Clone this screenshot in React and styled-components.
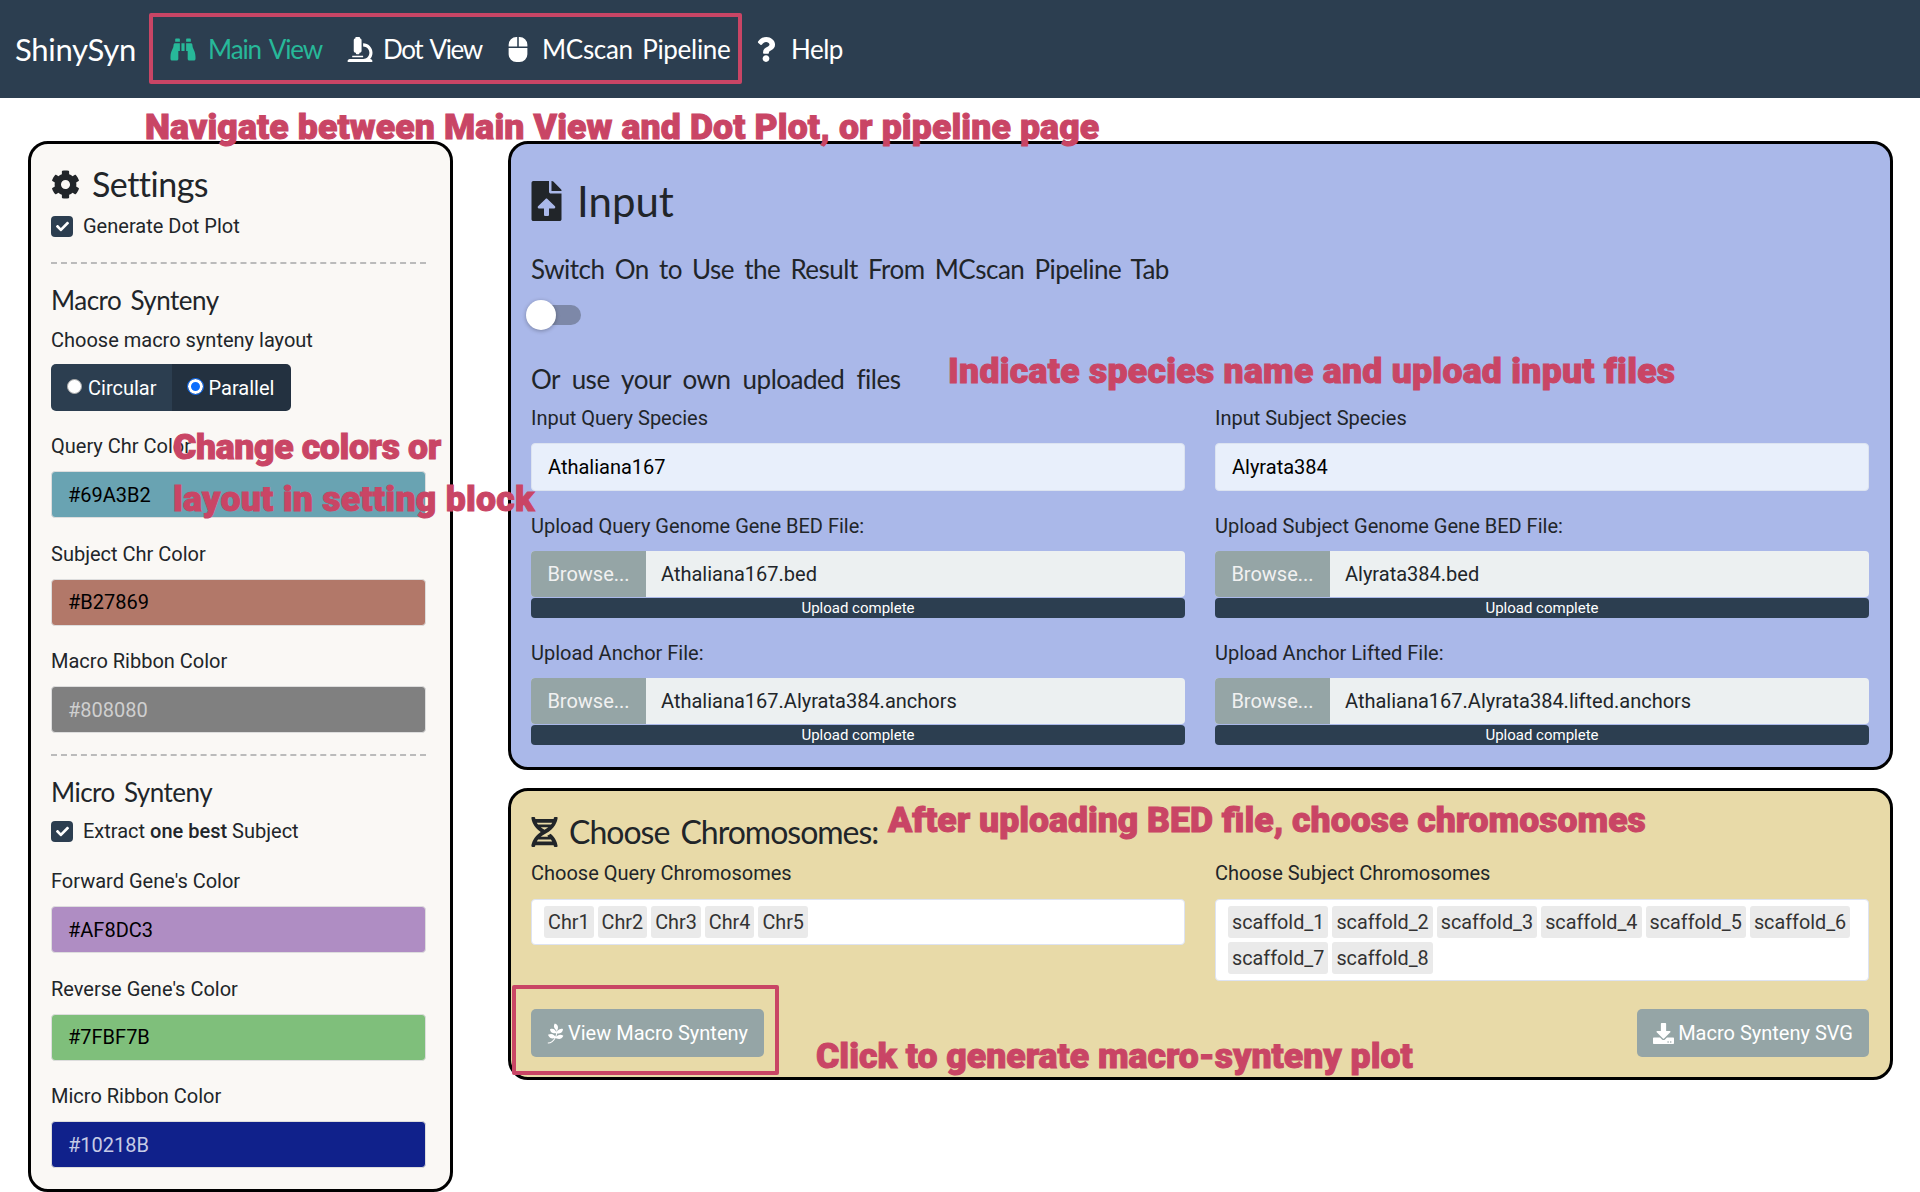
import React from 'react';
import styled, { createGlobalStyle } from 'styled-components';
import { FaBinoculars, FaMicroscope, FaMouse, FaQuestion, FaCog, FaFileUpload, FaDna, FaPagelines, FaDownload, FaCheck } from 'react-icons/fa';

const GlobalStyle = createGlobalStyle`
  html, body { margin: 0; padding: 0; background: #fff; overflow: hidden; }
  body { font-family: Roboto, "Liberation Sans", sans-serif; font-size: 20px; color: #212529; }
  * { box-sizing: border-box; }
`;

const headingFont = `Lato, "Open Sans", sans-serif`;

const Page = styled.div`
  position: relative;
  width: 1920px;
  height: 1192px;
`;

const Navbar = styled.nav`
  height: 98px;
  background: #2c3e50;
  display: flex;
  align-items: center;
  padding-left: 15px;
  font-family: ${headingFont};
  color: #fff;
`;

const Brand = styled.div`
  font-size: 31px;
  letter-spacing: -0.3px;
  width: 155px;
  flex: none;
`;

const NavItem = styled.a`
  display: flex;
  align-items: center;
  width: ${(p) => p.$width}px;
  flex: none;
  font-size: 26px;
  letter-spacing: ${(p) => p.$ls}px;
  word-spacing: 3px;
  color: ${(p) => (p.$active ? '#27b899' : '#fff')};
  svg { height: 25px; flex: none; margin-right: ${(p) => p.$iconGap}px; }
`;

const Content = styled.div`
  display: flex;
  align-items: flex-start;
  padding: 43px 27px 0 28px;
  gap: 55px;
`;

const Sidebar = styled.aside`
  width: 425px;
  height: 1051px;
  flex: none;
  background: #faf8f5;
  border: 3px solid #000;
  border-radius: 20px;
  padding: 20px 24px 0 20px;
`;

const SettingsTitle = styled.h3`
  margin: 0;
  font-family: ${headingFont};
  font-weight: 400;
  font-size: 34px;
  letter-spacing: -0.5px;
  line-height: 40px;
  display: flex;
  align-items: center;
  gap: 12px;
  svg { font-size: 29px; }
`;

const CheckRow = styled.div`
  display: flex;
  align-items: center;
  height: 24px;
  margin-top: ${(p) => p.$top}px;
  gap: 10px;
  b { font-weight: 500; }
`;

const CheckBox = styled.span`
  width: 22px;
  height: 21px;
  border-radius: 4px;
  background: #2c3e50;
  display: flex;
  align-items: center;
  justify-content: center;
  color: #fff;
  svg { font-size: 13px; }
`;

const Divider = styled.hr`
  margin: ${(p) => p.$top}px 0 ${(p) => p.$bottom}px;
  border: 0;
  border-top: 2px dashed #bbb;
`;

const GroupTitle = styled.h4`
  margin: 0;
  font-family: ${headingFont};
  font-weight: 400;
  font-size: 26px;
  letter-spacing: -0.5px;
  word-spacing: 3px;
  line-height: 34px;
`;

const Label = styled.label`
  display: block;
  line-height: 24px;
  margin-top: ${(p) => p.$top ?? 0}px;
  margin-bottom: ${(p) => p.$bottom ?? 0}px;
`;

const RadioGroup = styled.div`
  display: inline-flex;
  height: 47px;
  margin-top: 12px;
  border-radius: 5px;
  overflow: hidden;
  color: #fff;
`;

const RadioItem = styled.span`
  display: flex;
  align-items: center;
  gap: 6px;
  padding: 0 ${(p) => (p.$checked ? 17 : 15)}px 0 16px;
  background: ${(p) => (p.$checked ? '#233140' : '#2c3e50')};
`;

const RadioDot = styled.i`
  width: 15px;
  height: 15px;
  border-radius: 50%;
  margin-top: -3px;
  background: ${(p) => (p.$checked ? '#0d6efd' : '#fff')};
  border: ${(p) => (p.$checked ? '3px solid #fff; outline: 1px solid #0d6efd' : '1px solid #aaa')};
`;

const ColorField = styled.div`
  margin-top: ${(p) => p.$top ?? 23.5}px;
`;

const ColorInput = styled.input`
  display: block;
  width: 375px;
  height: 47px;
  margin-top: 13px;
  padding: 0 16px;
  border: 1px solid #ddd;
  border-radius: 4px;
  font: inherit;
  background: ${(p) => p.$bg};
  color: ${(p) => p.$fg || '#000'};
`;

const MainColumn = styled.main`
  flex: 1;
  min-width: 0;
`;

const Panel = styled.section`
  background: ${(p) => p.$bg};
  border: 3px solid #000;
  border-radius: 20px;
  padding: ${(p) => p.$pad};
  margin-top: ${(p) => p.$top ?? 0}px;
`;

const InputTitle = styled.h2`
  margin: 0;
  font-family: ${headingFont};
  font-weight: 400;
  font-size: 42px;
  line-height: 56px;
  display: flex;
  align-items: center;
  gap: 15px;
  svg { width: 31px; height: 40px; flex: none; color: #212529; }
`;

const SwitchText = styled.h4`
  margin: 24px 0 0;
  font-family: ${headingFont};
  font-weight: 400;
  font-size: 26px;
  line-height: 32px;
  word-spacing: 4px;
  letter-spacing: -0.5px;
`;

const Toggle = styled.div`
  position: relative;
  width: 50px;
  height: 20px;
  margin: 20px 0 5px;
  border-radius: 10px;
  background: #7d88a8;
`;

const ToggleKnob = styled.span`
  position: absolute;
  left: -5px;
  top: -5px;
  width: 30px;
  height: 30px;
  border-radius: 50%;
  background: #fff;
  box-shadow: 0 1px 4px rgba(0, 0, 0, 0.3);
`;

const OwnFiles = styled(SwitchText)`
  margin-top: 38px;
  word-spacing: 6px;
`;

const TwoCols = styled.div`
  display: grid;
  grid-template-columns: 1fr 1fr;
  column-gap: 30px;
  align-items: start;
`;

const TextInput = styled.div`
  height: 48px;
  display: flex;
  align-items: center;
  padding: 0 16px;
  background: #e8effb;
  border: 1px solid #dce3f0;
  border-radius: 4px;
  color: #000;
`;

const FileRow = styled.div`
  display: flex;
  height: 46px;
  border-radius: 4px;
  overflow: hidden;
  background: #ecf0f1;
`;

const BrowseButton = styled.span`
  width: 115px;
  display: flex;
  align-items: center;
  justify-content: center;
  background: #95a5a6;
  color: #f1f1f1;
`;

const FileName = styled.span`
  display: flex;
  align-items: center;
  padding-left: 15px;
`;

const ProgressBar = styled.div`
  height: 20px;
  margin-top: 1px;
  border-radius: 4px;
  background: #2c3e50;
  color: #fff;
  font-size: 15px;
  line-height: 20px;
  text-align: center;
`;

const ChooseTitle = styled.h3`
  margin: 0;
  font-family: ${headingFont};
  font-weight: 400;
  font-size: 32px;
  line-height: 40px;
  letter-spacing: -1px;
  word-spacing: 4px;
  display: flex;
  align-items: center;
  gap: 11px;
  svg { width: 27px; height: 30px; flex: none; }
`;

const ChipBox = styled.div`
  display: flex;
  flex-wrap: wrap;
  gap: 4px;
  padding: 6px 11px 6px 12px;
  background: #fff;
  border: 1px solid #dde3f2;
  border-radius: 4px;
`;

const Chip = styled.span`
  height: 32px;
  padding: 0 4px;
  display: flex;
  align-items: center;
  border-radius: 3px;
  background: #eaeaea;
  color: #333;
  font-size: 19.8px;
`;

const Actions = styled.div`
  display: flex;
  justify-content: space-between;
  margin-top: 28px;
`;

const ActionButton = styled.button`
  height: 48px;
  padding: 0 16px;
  display: flex;
  align-items: center;
  gap: 4px;
  border: 0;
  border-radius: 5px;
  background: #95a5a6;
  color: #fff;
  font: inherit;
  svg { width: ${(p) => p.$iconWidth}px; height: 21px; flex: none; }
`;

const RedFrame = styled.div`
  position: absolute;
  left: ${(p) => p.$x}px;
  top: ${(p) => p.$y}px;
  width: ${(p) => p.$w}px;
  height: ${(p) => p.$h}px;
  border: 4px solid #c94565;
  border-radius: 2px;
  pointer-events: none;
`;

const Note = styled.div`
  position: absolute;
  left: ${(p) => p.$x}px;
  top: ${(p) => p.$y}px;
  font-family: Roboto, sans-serif;
  font-weight: 900;
  font-size: 35.6px;
  line-height: 40px;
  letter-spacing: ${(p) => p.$ls ?? 0}px;
  -webkit-text-stroke: 1px #c94565;
  color: #c94565;
  white-space: nowrap;
`;

const colorsA = [
  { label: 'Query Chr Color', value: '#69A3B2', bg: '#69a3b2', top: 23 },
  { label: 'Subject Chr Color', value: '#B27869', bg: '#b27869' },
  { label: 'Macro Ribbon Color', value: '#808080', bg: '#808080', fg: '#cfcfcf' },
];

const colorsB = [
  { label: "Forward Gene's Color", value: '#AF8DC3', bg: '#af8dc3', top: 26 },
  { label: "Reverse Gene's Color", value: '#7FBF7B', bg: '#7fbf7b' },
  { label: 'Micro Ribbon Color', value: '#10218B', bg: '#10218b', fg: '#c6cbe6' },
];

const uploads = [
  [
    { label: 'Upload Query Genome Gene BED File:', file: 'Athaliana167.bed' },
    { label: 'Upload Subject Genome Gene BED File:', file: 'Alyrata384.bed' },
  ],
  [
    { label: 'Upload Anchor File:', file: 'Athaliana167.Alyrata384.anchors' },
    { label: 'Upload Anchor Lifted File:', file: 'Athaliana167.Alyrata384.lifted.anchors' },
  ],
];

const queryChrs = ['Chr1', 'Chr2', 'Chr3', 'Chr4', 'Chr5'];
const subjectChrs = [1, 2, 3, 4, 5, 6, 7, 8].map((n) => `scaffold_${n}`);

const ColorList = ({ items }) =>
  items.map((c) => (
    <ColorField key={c.label} $top={c.top}>
      <Label>{c.label}</Label>
      <ColorInput readOnly value={c.value} $bg={c.bg} $fg={c.fg} />
    </ColorField>
  ));

const App = () => (
  <Page>
    <GlobalStyle />
    <Navbar>
      <Brand>ShinySyn</Brand>
      <NavItem $active $width={177} $iconGap={12} $ls={-1.1}><FaBinoculars />Main View</NavItem>
      <NavItem $width={158} $iconGap={10} $ls={-1.4}><FaMicroscope />Dot View</NavItem>
      <NavItem $width={248} $iconGap={11} $ls={-0.3}><FaMouse />MCscan Pipeline</NavItem>
      <NavItem $width={90} $iconGap={12} $ls={-0.5}><FaQuestion />Help</NavItem>
    </Navbar>

    <Content>
      <Sidebar>
        <SettingsTitle><FaCog />Settings</SettingsTitle>
        <CheckRow $top={10}><CheckBox><FaCheck /></CheckBox>Generate Dot Plot</CheckRow>
        <Divider $top={24} $bottom={19} />
        <GroupTitle>Macro Synteny</GroupTitle>
        <Label $top={11}>Choose macro synteny layout</Label>
        <RadioGroup>
          <RadioItem><RadioDot />Circular</RadioItem>
          <RadioItem $checked><RadioDot $checked />Parallel</RadioItem>
        </RadioGroup>
        <ColorList items={colorsA} />
        <Divider $top={21} $bottom={19} />
        <GroupTitle>Micro Synteny</GroupTitle>
        <CheckRow $top={10}><CheckBox><FaCheck /></CheckBox><span>Extract <b>one best</b> Subject</span></CheckRow>
        <ColorList items={colorsB} />
      </Sidebar>

      <MainColumn>
        <Panel $bg="#aab8e9" $pad="29px 21px 22px 20px">
          <InputTitle><FaFileUpload />Input</InputTitle>
          <SwitchText>Switch On to Use the Result From MCscan Pipeline Tab</SwitchText>
          <Toggle><ToggleKnob /></Toggle>
          <OwnFiles>Or use your own uploaded files</OwnFiles>
          <TwoCols>
            <div>
              <Label $top={11} $bottom={13}>Input Query Species</Label>
              <TextInput>Athaliana167</TextInput>
            </div>
            <div>
              <Label $top={11} $bottom={13}>Input Subject Species</Label>
              <TextInput>Alyrata384</TextInput>
            </div>
          </TwoCols>
          {uploads.map((row) => (
            <TwoCols key={row[0].label}>
              {row.map((u) => (
                <div key={u.label}>
                  <Label $top={23} $bottom={13}>{u.label}</Label>
                  <FileRow>
                    <BrowseButton>Browse...</BrowseButton>
                    <FileName>{u.file}</FileName>
                  </FileRow>
                  <ProgressBar>Upload complete</ProgressBar>
                </div>
              ))}
            </TwoCols>
          ))}
        </Panel>

        <Panel $bg="#e8daa8" $top={18} $pad="21px 21px 20px 20px">
          <ChooseTitle><FaDna />Choose Chromosomes:</ChooseTitle>
          <TwoCols>
            <div>
              <Label $top={9} $bottom={14}>Choose Query Chromosomes</Label>
              <ChipBox>{queryChrs.map((c) => <Chip key={c}>{c}</Chip>)}</ChipBox>
            </div>
            <div>
              <Label $top={9} $bottom={14}>Choose Subject Chromosomes</Label>
              <ChipBox>{subjectChrs.map((c) => <Chip key={c}>{c}</Chip>)}</ChipBox>
            </div>
          </TwoCols>
          <Actions>
            <ActionButton $iconWidth={17}><FaPagelines />View Macro Synteny</ActionButton>
            <ActionButton $iconWidth={21}><FaDownload />Macro Synteny SVG</ActionButton>
          </Actions>
        </Panel>
      </MainColumn>
    </Content>

    <RedFrame $x={149} $y={13} $w={593} $h={71} />
    <RedFrame $x={512} $y={985} $w={267} $h={90} />
    <Note $x={145} $y={107} $ls={0.13}>Navigate between Main View and Dot Plot, or pipeline page</Note>
    <Note $x={173} $y={427} $ls={-0.35}>Change colors or</Note>
    <Note $x={173} $y={479} $ls={0.27}>layout in setting block</Note>
    <Note $x={948} $y={351} $ls={0.27}>Indicate species name and upload input files</Note>
    <Note $x={888} $y={800}>After uploading BED file, choose chromosomes</Note>
    <Note $x={816} $y={1036}>Click to generate macro-synteny plot</Note>
  </Page>
);

export default App;
